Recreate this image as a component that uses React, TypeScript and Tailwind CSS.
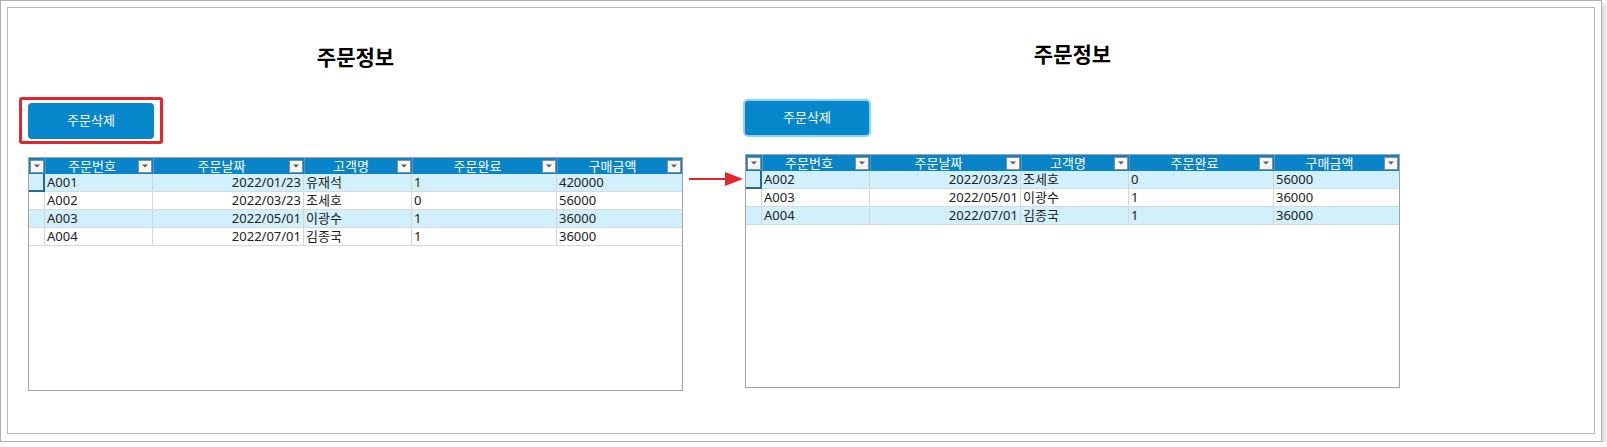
const columns = [
  { label: "주문번호", w: "w-[108px]", align: "text-left" },
  { label: "주문날짜", w: "w-[151px]", align: "text-right" },
  { label: "고객명", w: "w-[108px]", align: "text-left" },
  { label: "주문완료", w: "w-[145px]", align: "text-left" },
  { label: "구매금액", w: "w-[125px]", align: "text-left" },
];

const allRows = [
  ["A001", "2022/01/23", "유재석", "1", "420000"],
  ["A002", "2022/03/23", "조세호", "0", "56000"],
  ["A003", "2022/05/01", "이광수", "1", "36000"],
  ["A004", "2022/07/01", "김종국", "1", "36000"],
];

const font = { fontFamily: '"Noto Sans", "Noto Sans CJK KR", sans-serif' };

function FilterButton() {
  return (
    <span className="flex h-[13px] w-[14px] shrink-0 items-center justify-center border border-[#8c8c8c] bg-[#f6f6f6]">
      <svg width="6" height="4" viewBox="0 0 6 4">
        <path d="M0 0.5h6L3 3.5z" fill="#5a5a5a" />
      </svg>
    </span>
  );
}

function OrderTable({ rows }: { rows: string[][] }) {
  return (
    <div className="h-[234px] w-[655px] border border-[#a3a3a3] bg-white">
      <div className="flex h-[16px] bg-[#0a84c8]">
        <div className="flex w-[16px] items-center justify-center">
          <FilterButton />
        </div>
        {columns.map((c) => (
          <div key={c.label} className={`${c.w} flex items-center border-l border-[#3c9cd6] pr-[1px]`}>
            <span className="flex-1 text-center text-[13px] leading-[16px] text-white">{c.label}</span>
            <FilterButton />
          </div>
        ))}
      </div>
      {rows.map((r, i) => (
        <div
          key={r[0]}
          className={`flex h-[18px] border-b border-[#d3dbe0] text-[13px] leading-[17px] text-[#222] ${
            i % 2 === 0 ? "bg-[#d2effc]" : "bg-white"
          }`}
        >
          <div
            className={`w-[16px] ${i === 0 ? "border-r-2 border-b-2 border-[#1f6c98] -mb-[1px]" : "border-r border-[#d6d6d6]"}`}
          />
          {r.map((v, j) => (
            <div
              key={j}
              className={`${columns[j].w} ${columns[j].align} border-r border-[#d6d6d6] px-[2px] last:border-r-0`}
            >
              {v}
            </div>
          ))}
        </div>
      ))}
    </div>
  );
}

export default function App() {
  return (
    <div className="bg-white" style={font}>
      <div className="h-[442px] w-[1602px] border border-[#b0b0b0] bg-white shadow-[4px_4px_4px_rgba(0,0,0,0.14)]">
        <div className="ml-[6px] mt-[6px] h-[427px] w-[1588px] border border-[#bababa]">
          <div className="flex pl-[20px]">
            <div className="flex w-[655px] flex-col">
              <div className="mt-[35px] h-[28px] text-center text-[21px] font-bold leading-[28px] text-black">
                주문정보
              </div>
              <div className="ml-[-9px] mt-[26px] self-start rounded-[3px] border-[3px] border-[#e3262d] px-[6px] pb-[2px] pt-[3px]">
                <button className="h-[36px] w-[126px] rounded-[4px] bg-[#0787cb] text-[13px] text-white">
                  주문삭제
                </button>
              </div>
              <div className="mt-[13px]">
                <OrderTable rows={allRows} />
              </div>
            </div>
            <div className="w-[62px] pt-[163px]">
              <svg width="62" height="16" viewBox="0 0 62 16">
                <path d="M6 8H44" stroke="#e3262d" strokeWidth="2.2" />
                <path d="M42 1L60 8L42 15z" fill="#e3262d" />
              </svg>
            </div>
            <div className="flex w-[655px] flex-col">
              <div className="mt-[32px] h-[28px] text-center text-[21px] font-bold leading-[28px] text-black">
                주문정보
              </div>
              <button className="ml-[-2px] mt-[31px] h-[38px] w-[128px] self-start rounded-[5px] border-2 border-[#8fd2f6] bg-[#0787cb] text-[13px] text-white">
                주문삭제
              </button>
              <div className="mt-[17px]">
                <OrderTable rows={allRows.slice(1)} />
              </div>
            </div>
          </div>
        </div>
      </div>
    </div>
  );
}
